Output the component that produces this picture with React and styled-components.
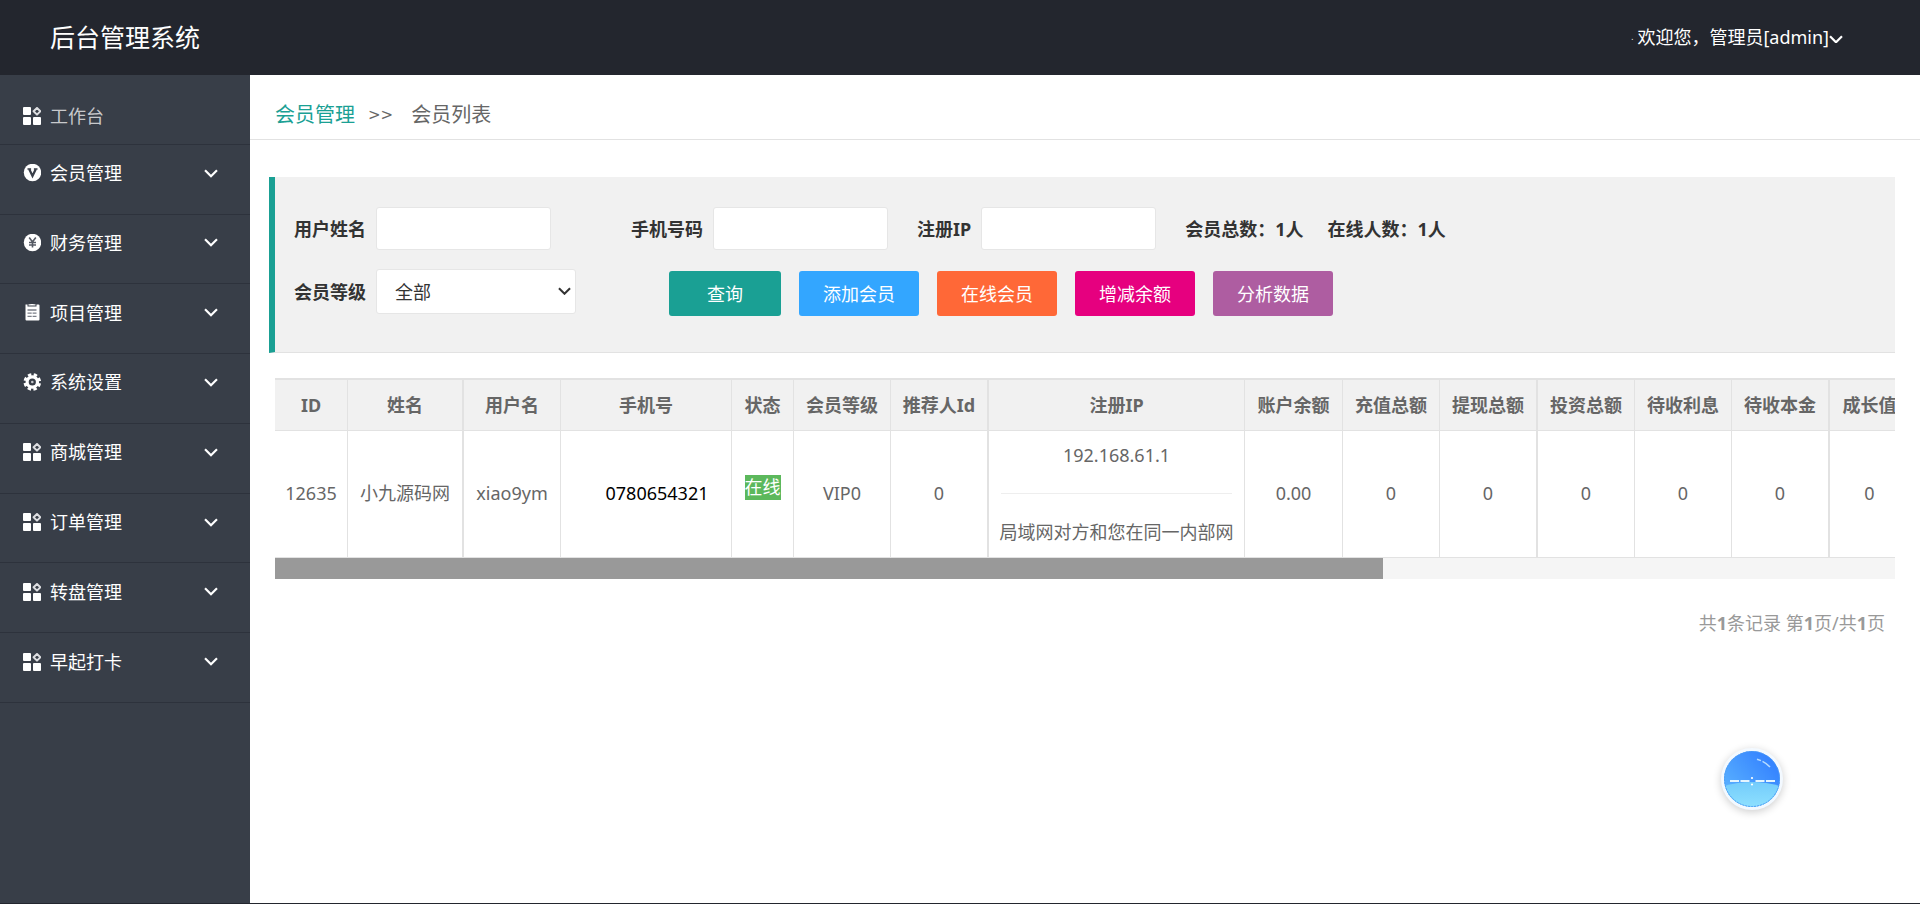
import React, { useState } from "react";
import styled, { createGlobalStyle } from "styled-components";

const GlobalStyle = createGlobalStyle`
  * {
    box-sizing: border-box;
  }
  body {
    margin: 0;
    background: #fff;
    color: #333;
    font-family: "Noto Sans", "Noto Sans CJK SC", sans-serif;
    font-size: 18px;
    line-height: 24px;
  }
  button, input, select {
    font: inherit;
    margin: 0;
  }
  a {
    text-decoration: none;
  }
`;

const Page = styled.div`
  display: flex;
  flex-direction: column;
  min-height: 100vh;
  border-bottom: 1px solid #23262e;
`;

const Header = styled.header`
  display: flex;
  align-items: center;
  justify-content: space-between;
  height: 75px;
  padding: 0 77px 1px 50px;
  background: #23262e;
  color: #fff;
`;

const Logo = styled.h1`
  margin: 0;
  font-size: 25px;
  font-weight: 400;
  line-height: 32px;
`;

const UserMenu = styled.button`
  display: flex;
  align-items: center;
  padding: 0;
  border: 0;
  background: none;
  color: #fff;
  cursor: pointer;

  svg {
    margin-top: 4px;
  }
`;

const Dot = styled.span`
  margin-right: 4px;
  font-size: 8px;
`;

const Body = styled.div`
  display: flex;
  flex: 1;
`;

const Sidebar = styled.nav`
  flex: 0 0 250px;
  background: #383e48;
`;

const Menu = styled.ul`
  display: grid;
  grid-template-rows: repeat(9, 1fr);
  height: 628px;
  margin: 0;
  padding: 0;
  list-style: none;
`;

const MenuItem = styled.li`
  display: flex;
  border-bottom: 1px solid #2d323c;
`;

const MenuLink = styled.a`
  display: flex;
  flex: 1;
  align-items: center;
  gap: 9px;
  padding: 14px 32px 0 23px;
  color: #c8c9cc;
`;

const MenuButton = styled.button`
  display: flex;
  flex: 1;
  align-items: center;
  gap: 9px;
  padding: 0 32px 12px 23px;
  border: 0;
  background: none;
  color: #fff;
  text-align: left;
  cursor: pointer;
`;

const MenuText = styled.span`
  flex: 1;
`;

const Main = styled.main`
  flex: 1;
  min-width: 0;
`;

const Breadcrumb = styled.div`
  display: flex;
  align-items: center;
  height: 65px;
  padding: 16px 25px 0;
  border-bottom: 1px solid #e2e2e2;
  color: #666;
  font-size: 20px;

  a {
    color: #1aa094;
  }
`;

const Separator = styled.span`
  margin: 0 18px 0 13px;
  font-family: "DejaVu Sans", sans-serif;
  font-size: 15px;
`;

const Filter = styled.form`
  margin: 37px 25px 0 19px;
  padding: 30px 19px 36px;
  border-left: 6px solid #1aa094;
  border-bottom: 1px solid #e2e2e2;
  background: #f1f1f1;
`;

const FilterRow = styled.div`
  display: flex;
  align-items: ${(props) => props.$align || "center"};
  gap: 29px;
  margin-bottom: ${(props) => (props.$last ? 0 : 19)}px;
`;

const Field = styled.div`
  display: flex;
  align-items: center;
  gap: 10px;
  min-width: ${(props) => props.$width || 0}px;
`;

const Label = styled.label`
  font-weight: 700;
  white-space: nowrap;
`;

const Input = styled.input`
  width: 175px;
  height: 43px;
  padding: 0 12px;
  border: 1px solid #e6e6e6;
  border-radius: 3px;
  background: #fff;
`;

const SelectBox = styled.div`
  position: relative;
  width: 200px;

  svg {
    position: absolute;
    top: 18px;
    right: 5px;
    pointer-events: none;
  }
`;

const Select = styled.select`
  display: block;
  width: 100%;
  height: 45px;
  padding: 0 18px;
  border: 1px solid #e6e6e6;
  border-radius: 3px;
  background: #fff;
  color: #333;
  appearance: none;
`;

const Stats = styled.div`
  display: flex;
  gap: 24px;
  font-weight: 700;
  white-space: nowrap;
`;

const Buttons = styled.div`
  display: flex;
  gap: 18px;
  margin-top: 2px;
`;

const Button = styled.button`
  width: ${(props) => props.$width || 120}px;
  height: 45px;
  padding: 0;
  border: 0;
  border-radius: 3px;
  background: ${(props) => props.$color};
  color: #fff;
  cursor: pointer;
`;

const TableWrap = styled.div`
  margin: 25px 25px 0;
  overflow: hidden;
`;

const Table = styled.table`
  width: 1635px;
  table-layout: fixed;
  border-collapse: separate;
  border-spacing: 0;
  border-top: 2px solid #e2e2e2;
  color: #666;
  text-align: center;
`;

const Th = styled.th`
  height: 51px;
  padding: 0 0 1px;
  border-right: ${(props) => (props.$thick ? 2 : 1)}px solid #e2e2e2;
  border-bottom: 1px solid #e2e2e2;
  background: #f1f1f1;
  white-space: nowrap;
`;

const Td = styled.td`
  height: 127px;
  padding: 0 0 2px;
  border-right: ${(props) => (props.$thick ? 2 : 1)}px solid #e2e2e2;
  border-bottom: 1px solid #e2e2e2;
  white-space: nowrap;
`;

const Phone = styled.span`
  padding-left: 22px;
  color: #000;
`;

const Badge = styled.span`
  display: inline-block;
  margin-bottom: 11px;
  background: #5cb85c;
  color: #fff;
  line-height: 25px;
`;

const Rule = styled.hr`
  margin: 26px 12px;
  border: 0;
  border-top: 1px solid #eee;
`;

const Track = styled.div`
  height: 21px;
  background: #f5f5f5;
`;

const Thumb = styled.div`
  height: 100%;
  background: #999;
`;

const Pager = styled.div`
  margin: 32px 35px 0;
  color: #999;
  text-align: right;
`;

const Ball = styled.button`
  position: fixed;
  right: 137px;
  bottom: 94px;
  width: 62px;
  height: 62px;
  padding: 0;
  border: 0;
  border-radius: 50%;
  background: #f3f9ff;
  box-shadow: 0 2px 8px rgba(0, 0, 0, 0.2);
  cursor: pointer;

  svg {
    display: block;
  }
`;

const Chevron = ({ size = 14, color = "#fff" }) => (
  <svg width={size} height={size * 0.64} viewBox="0 0 14 9" fill="none">
    <path d="M1 1.3 7 7.3 13 1.3" stroke={color} strokeWidth="2.2" />
  </svg>
);

const GridIcon = () => (
  <svg width="18" height="18" viewBox="0 0 18 18" fill="#fff">
    <rect x="0" y="0" width="8" height="8" rx="1" />
    <rect x="0" y="10" width="8" height="8" rx="1" />
    <rect x="10" y="10" width="8" height="8" rx="1" />
    <path
      d="M14 1 17.4 4.3 14 7.6 10.6 4.3Z"
      fill="none"
      stroke="#dcdde0"
      strokeWidth="2"
      strokeLinejoin="round"
    />
  </svg>
);

const VipIcon = () => (
  <svg width="18" height="18" viewBox="0 1 18 18" fill="none">
    <circle cx="9.5" cy="9.5" r="8.7" fill="#fff" />
    <path d="M4.5 6h3.6M10.9 6h3.6" stroke="#383e48" strokeWidth="1.4" />
    <path d="M6.3 6.3 9.5 12.9 12.7 6.3" stroke="#383e48" strokeWidth="2.3" />
  </svg>
);

const MoneyIcon = () => (
  <svg width="18" height="18" viewBox="0 1 18 18" fill="none">
    <circle cx="9.5" cy="9.5" r="8.7" fill="#fff" />
    <path
      d="M6.2 4.5 9.5 9 12.8 4.5M9.5 9V14.5M6 9.5h7M6 12h7"
      stroke="#555a64"
      strokeWidth="1.6"
    />
  </svg>
);

const NoteIcon = () => (
  <svg width="18" height="18" viewBox="0 1 18 18" fill="none">
    <path d="M2.5 1.5h2v2h9v-2h2q1 0 1 1v14q0 1-1 1h-12q-1 0-1-1v-14Z" fill="#fff" />
    <path d="M5.5 2.6V1.3h2V1h3v.3h2v1.3Z" fill="#fff" />
    <path
      d="M4.5 7h9M4.5 10.2h4.2M9.6 10.2h3.9M4.5 13.4h4.2M9.6 13.4h3.9"
      stroke="#7b7f88"
      strokeWidth="1.3"
    />
  </svg>
);

const GearIcon = () => (
  <svg width="18" height="18" viewBox="0 0 18 18" fill="none">
    <circle cx="9.3" cy="9" r="5.2" stroke="#fff" strokeWidth="3.2" />
    <circle
      cx="9.3"
      cy="9"
      r="7.4"
      stroke="#fff"
      strokeWidth="2.8"
      strokeDasharray="3.4 2.41"
      strokeDashoffset="-1.2"
    />
    <circle cx="9.3" cy="9" r="1.3" fill="#c4c6ca" />
  </svg>
);

const BallIcon = () => (
  <svg width="62" height="62" viewBox="0 0 62 62">
    <defs>
      <linearGradient id="sky" x1="0.9" y1="0.1" x2="0.1" y2="0.8">
        <stop offset="0" stopColor="#2f7cff" />
        <stop offset="1" stopColor="#5cb4ff" />
      </linearGradient>
      <linearGradient id="sea" x1="0" y1="0" x2="0" y2="1">
        <stop offset="0" stopColor="#74ccfb" />
        <stop offset="1" stopColor="#90e2ff" />
      </linearGradient>
      <clipPath id="disc">
        <circle cx="31" cy="31" r="28" />
      </clipPath>
    </defs>
    <g clipPath="url(#disc)">
      <rect width="62" height="62" fill="url(#sky)" />
      <path d="M0 39Q31 29 62 39V62H0Z" fill="url(#sea)" />
    </g>
    <circle cx="31" cy="31" r="27.5" fill="none" stroke="#4c9df5" strokeDasharray="2 1" />
    <path d="M9 33h9M19.5 33h9M34.5 33h9M45 33h9" stroke="#e4f5ff" strokeWidth="2" />
    <circle cx="31" cy="30" r="1.1" fill="#fff" />
    <circle cx="31" cy="36.5" r="1.1" fill="#fff" />
    <path
      d="M36 11.2 40 12.6M41.5 13.3Q46 15.5 49 19"
      stroke="#b5dbff"
      strokeWidth="1.5"
      fill="none"
    />
  </svg>
);

const groups = [
  { name: "会员管理", icon: VipIcon },
  { name: "财务管理", icon: MoneyIcon },
  { name: "项目管理", icon: NoteIcon },
  { name: "系统设置", icon: GearIcon },
  { name: "商城管理", icon: GridIcon },
  { name: "订单管理", icon: GridIcon },
  { name: "转盘管理", icon: GridIcon },
  { name: "早起打卡", icon: GridIcon },
];

const actions = [
  { name: "查询", color: "#1aa094", width: 112 },
  { name: "添加会员", color: "#33a6ff" },
  { name: "在线会员", color: "#ff6837" },
  { name: "增减余额", color: "#e6007f" },
  { name: "分析数据", color: "#ae5da1" },
];

const columns = [
  { title: "ID", width: 73, value: "12635" },
  { title: "姓名", width: 116, value: "小九源码网", thick: true },
  { title: "用户名", width: 97, value: "xiao9ym" },
  { title: "手机号", width: 171, value: <Phone>0780654321</Phone> },
  { title: "状态", width: 62, value: <Badge>在线</Badge> },
  { title: "会员等级", width: 97, value: "VIP0" },
  { title: "推荐人Id", width: 98, value: "0", thick: true },
  {
    title: "注册IP",
    width: 256,
    value: (
      <>
        192.168.61.1
        <Rule />
        局域网对方和您在同一内部网
      </>
    ),
  },
  { title: "账户余额", width: 98, value: "0.00" },
  { title: "充值总额", width: 97, value: "0" },
  { title: "提现总额", width: 98, value: "0", thick: true },
  { title: "投资总额", width: 97, value: "0" },
  { title: "待收利息", width: 97, value: "0" },
  { title: "待收本金", width: 98, value: "0", thick: true },
  { title: "成长值", width: 80, value: "0" },
];

const Col = styled.col`
  width: ${(props) => props.$width}px;
`;

const App = () => {
  const [level, setLevel] = useState("all");
  return (
    <Page>
      <GlobalStyle />
      <Header>
        <Logo>后台管理系统</Logo>
        <UserMenu type="button">
          <Dot>.</Dot>
          欢迎您，管理员[admin]
          <Chevron />
        </UserMenu>
      </Header>
      <Body>
        <Sidebar>
          <Menu>
            <MenuItem>
              <MenuLink href="#">
                <GridIcon />
                <MenuText>工作台</MenuText>
              </MenuLink>
            </MenuItem>
            {groups.map(({ name, icon: Icon }) => (
              <MenuItem key={name}>
                <MenuButton type="button">
                  <Icon />
                  <MenuText>{name}</MenuText>
                  <Chevron />
                </MenuButton>
              </MenuItem>
            ))}
          </Menu>
        </Sidebar>
        <Main>
          <Breadcrumb>
            <a href="#">会员管理</a>
            <Separator>&gt;&gt;</Separator>
            <span>会员列表</span>
          </Breadcrumb>

          <Filter onSubmit={(e) => e.preventDefault()}>
            <FilterRow>
              <Field $width={308}>
                <Label htmlFor="name">用户姓名</Label>
                <Input id="name" type="text" />
              </Field>
              <Field>
                <Label htmlFor="phone">手机号码</Label>
                <Input id="phone" type="text" />
              </Field>
              <Field>
                <Label htmlFor="ip">注册IP</Label>
                <Input id="ip" type="text" />
              </Field>
              <Stats>
                <span>会员总数：1人</span>
                <span>在线人数：1人</span>
              </Stats>
            </FilterRow>
            <FilterRow $align="flex-start" $last>
              <Field $width={346}>
                <Label htmlFor="level">会员等级</Label>
                <SelectBox>
                  <Select
                    id="level"
                    value={level}
                    onChange={(e) => setLevel(e.target.value)}
                  >
                    <option value="all">全部</option>
                    <option value="vip0">VIP0</option>
                  </Select>
                  <Chevron size={13} color="#333" />
                </SelectBox>
              </Field>
              <Buttons>
                {actions.map((item) => (
                  <Button
                    key={item.name}
                    type="button"
                    $color={item.color}
                    $width={item.width}
                  >
                    {item.name}
                  </Button>
                ))}
              </Buttons>
            </FilterRow>
          </Filter>

          <TableWrap>
            <Table>
              <colgroup>
                {columns.map((col) => (
                  <Col key={col.title} $width={col.width} />
                ))}
              </colgroup>
              <thead>
                <tr>
                  {columns.map((col) => (
                    <Th key={col.title} $thick={col.thick}>
                      {col.title}
                    </Th>
                  ))}
                </tr>
              </thead>
              <tbody>
                <tr>
                  {columns.map((col) => (
                    <Td key={col.title} $thick={col.thick}>
                      {col.value}
                    </Td>
                  ))}
                </tr>
              </tbody>
            </Table>
            <Track>
              <Thumb style={{ width: `${(1108 / 1620) * 100}%` }} />
            </Track>
          </TableWrap>

          <Pager>
            共<b>1</b>条记录 第<b>1</b>页/共<b>1</b>页
          </Pager>
        </Main>
      </Body>
      <Ball type="button" aria-label="助手">
        <BallIcon />
      </Ball>
    </Page>
  );
};

export default App;
